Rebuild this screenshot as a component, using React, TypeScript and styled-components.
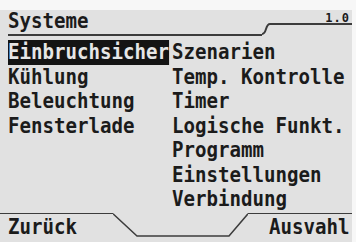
import React from 'react';
import styled, { createGlobalStyle } from 'styled-components';

const GlobalStyle = createGlobalStyle`
  html, body {
    margin: 0;
    padding: 0;
    background: #f7f7f7;
  }
  body {
    width: 356px;
    height: 242px;
    overflow: hidden;
    font-family: 'DejaVu Sans Mono', 'Liberation Mono', monospace;
  }
`;

const Screen = styled.div`
  margin-top: 10px;
  width: 352px;
  height: 232px;
  background: #e1e1e1;
  color: #1b1b1b;
  display: flex;
  flex-direction: column;
  font-weight: bold;
  font-size: 21px;
`;

// LCD glyphs are narrower than DejaVu's, so squeeze each run horizontally
const Lcd = styled.span<{ $selected?: boolean; $origin?: 'left' | 'right' }>`
  display: inline-block;
  transform: scaleX(0.91);
  transform-origin: ${(p) => p.$origin ?? 'left'} center;
  background: ${(p) => (p.$selected ? '#141414' : 'transparent')};
  color: ${(p) => (p.$selected ? '#e6e6e6' : 'inherit')};
  white-space: nowrap;
`;

const Header = styled.header`
  display: flex;
  align-items: flex-start;
  height: 30px;
  padding-left: 8px;
`;

const TitleCell = styled.div`
  flex: 0 0 254px;
  height: 23px;
  padding-top: 1px;
  line-height: 20px;
  border-bottom: 2px solid #3c3c3c;
`;

const VersionCell = styled.div`
  flex: 1;
  box-sizing: border-box;
  height: 15px;
  padding: 2px 2px 0 0;
  text-align: right;
  font-size: 12px;
  line-height: 12px;
  letter-spacing: 1px;
  border-bottom: 2px solid #3c3c3c;
`;

const Menu = styled.main`
  display: flex;
  height: 173px;
  padding-left: 8px;
`;

const Column = styled.ul<{ $width?: number }>`
  list-style: none;
  margin: 0;
  padding: 0;
  min-width: 0;
  flex: ${(p) => (p.$width ? `0 0 ${p.$width}px` : '1')};
  display: flex;
  flex-direction: column;
`;

const Item = styled.li`
  height: 24.5px;
  line-height: 24.5px;
`;

const Footer = styled.footer`
  display: flex;
  height: 29px;
`;

const SoftKey = styled.div<{ $align: 'left' | 'right'; $width?: number }>`
  flex: ${(p) => (p.$width ? `0 0 ${p.$width}px` : '1')};
  min-width: 0;
  box-sizing: border-box;
  border-top: 1.5px solid #3c3c3c;
  line-height: 26px;
  text-align: ${(p) => p.$align};
  padding: ${(p) => (p.$align === 'left' ? '0 0 0 8px' : '0 2px 0 0')};
`;

const Notch = () => (
  <svg width="135" height="29" viewBox="0 0 135 29" style={{ flex: '0 0 135px' }}>
    <path d="M0 0.75 L24 23 L116 23 L135 0.75" fill="none" stroke="#3c3c3c" strokeWidth="1.5" />
  </svg>
);

const Step = () => (
  <svg width="8" height="25" viewBox="0 0 8 25" style={{ flex: '0 0 8px' }}>
    <path d="M0 24 C5 24 3 14 8 14" fill="none" stroke="#3c3c3c" strokeWidth="2" />
  </svg>
);

const left = ['Einbruchsicher', 'Kühlung', 'Beleuchtung', 'Fensterlade'];
const right = [
  'Szenarien',
  'Temp. Kontrolle',
  'Timer',
  'Logische Funkt.',
  'Programm',
  'Einstellungen',
  'Verbindung',
];

export default function App() {
  return (
    <>
      <GlobalStyle />
      <Screen>
        <Header>
          <TitleCell>
            <Lcd>Systeme</Lcd>
          </TitleCell>
          <Step />
          <VersionCell>1.0</VersionCell>
        </Header>
        <Menu>
          <Column $width={164}>
            {left.map((name, i) => (
              <Item key={name}>
                <Lcd $selected={i === 0}>{name}</Lcd>
              </Item>
            ))}
          </Column>
          <Column>
            {right.map((name) => (
              <Item key={name}>
                <Lcd>{name}</Lcd>
              </Item>
            ))}
          </Column>
        </Menu>
        <Footer>
          <SoftKey $align="left" $width={113}>
            <Lcd>Zurück</Lcd>
          </SoftKey>
          <Notch />
          <SoftKey $align="right">
            <Lcd $origin="right">Ausvahl</Lcd>
          </SoftKey>
        </Footer>
      </Screen>
    </>
  );
}
